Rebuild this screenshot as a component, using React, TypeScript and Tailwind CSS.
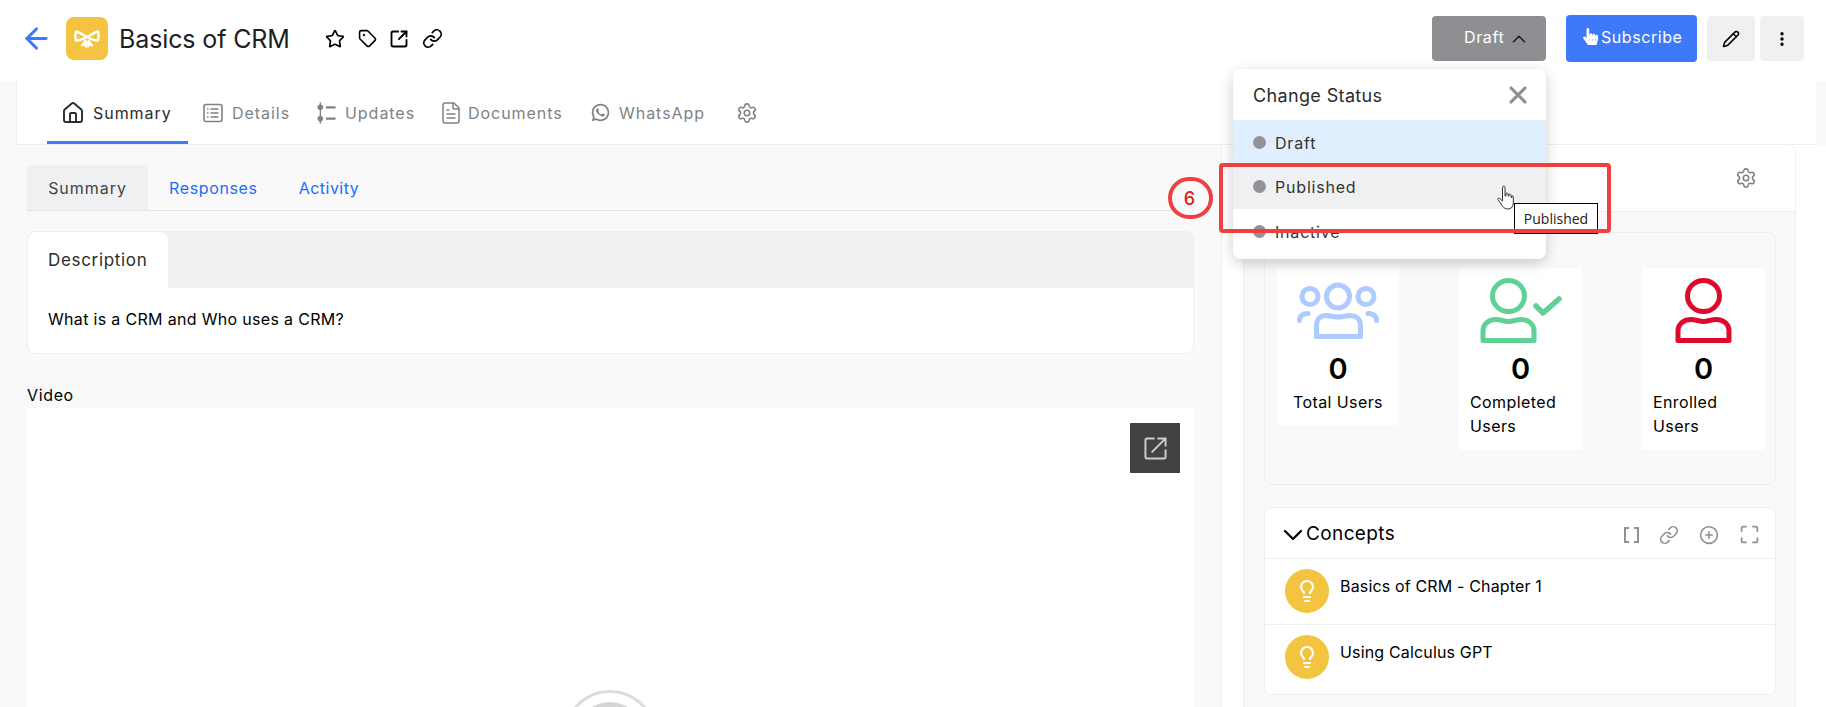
import React from 'react'
import {
  ArrowLeft,
  ChevronDown,
  ChevronUp,
  CirclePlus,
  EllipsisVertical,
  FileText,
  House,
  Lightbulb,
  Link,
  Maximize,
  Pencil,
  Settings,
  SquareArrowOutUpRight,
  Star,
  Tag,
  X,
} from 'lucide-react'
import { RiWhatsappLine } from 'react-icons/ri'
import { FaHandPointer } from 'react-icons/fa'

const Bow = () => (
  <svg viewBox="0 0 26 20" className="w-[26px] h-[20px]" fill="none" stroke="#fff" strokeWidth="2.4" strokeLinejoin="round">
    <path d="M12 7.500C8 5 4.500 3 2 2.500c-.8 3-.8 6 0 9 3.500 0 7-1 10-3.500z" />
    <path d="M14 7.500c4-2.500 7.500-4.500 10-5 .8 3 .8 6 0 9-3.500 0-7-1-10-3.500z" />
    <path d="M13 6.500v3" strokeWidth="4" />
    <path d="M11 11l-4 6 3.500-.5 1.500 2 1-6zM15 11l4 6-3.500-.5-1.500 2-1-6z" fill="#fff" strokeWidth="1" />
  </svg>
)

const DetailsIcon = () => (
  <svg viewBox="0 0 20 20" className="w-[20px] h-[20px]" fill="none" stroke="#7e8287" strokeWidth="1.6">
    <rect x="1" y="1.500" width="18" height="17" rx="2" />
    <path d="M7.500 6h8M7.500 10h8M7.500 14h8M4 6h1.500M4 10h1.500M4 14h1.500" />
  </svg>
)

const UpdatesIcon = () => (
  <svg viewBox="0 0 20 22" className="w-[19px] h-[22px]" fill="#7e8287" stroke="#7e8287">
    <circle cx="3.500" cy="5" r="2.600" />
    <circle cx="3.500" cy="17" r="2.600" />
    <path d="M3.500 0v22" strokeWidth="1.400" />
    <path d="M9.500 5h10M9.500 17h10" strokeWidth="2.400" />
  </svg>
)

const Person = ({ color }: { color: string }) => (
  <svg viewBox="0 0 57 65" className="w-[57px] h-[65px] shrink-0" fill="none" stroke={color} strokeWidth="5" strokeLinejoin="round">
    <ellipse cx="28.500" cy="18" rx="16" ry="15.500" />
    <path d="M3 62.500H54V53C54 45 47 41.500 41 41.500C36 41.500 33 43.500 28.500 43.500C24 43.500 21 41.500 16 41.500C10 41.500 3 45 3 53Z" />
  </svg>
)

const TotalIcon = () => (
  <svg viewBox="0 0 82 57" className="w-[82px] h-[57px]" fill="none" stroke="#adcbff" strokeWidth="5" strokeLinecap="round" strokeLinejoin="round">
    <circle cx="41" cy="14.500" r="11.500" />
    <circle cx="13" cy="14.500" r="8" />
    <circle cx="69" cy="14.500" r="8" />
    <path d="M19.500 54.500H63.500V44C63.500 36 58 33.500 53 33.500C49 33.500 46 35 41 35C36 35 33 33.500 29 33.500C24 33.500 19.500 36 19.500 44Z" />
    <path d="M2.500 38.500C2.500 34 6 31.500 11 31.500" />
    <path d="M79.500 38.500C79.500 34 76 31.500 71 31.500" />
  </svg>
)

const CheckIcon = () => (
  <svg viewBox="0 0 29 21" className="w-[29px] h-[21px] absolute left-[53px] top-[18px]" fill="none" stroke="#61d095" strokeWidth="5.500" strokeLinecap="round" strokeLinejoin="round">
    <path d="M3 10l7 7L26 3" />
  </svg>
)

const navItems = [
  { label: 'Details', icon: <DetailsIcon />, cls: 'w-[54px]', tab: 'gap-[9px] pl-[15px] pr-[16px]' },
  { label: 'Updates', icon: <UpdatesIcon />, cls: 'w-[68px]', tab: 'gap-[9px] pl-[15px] pr-[26px]' },
  { label: 'Documents', icon: <FileText size={24} strokeWidth={1.500} className="text-[#7e8287]" />, cls: 'w-[94px]', tab: 'gap-[5px] pr-[28px]' },
  { label: 'WhatsApp', icon: <RiWhatsappLine size={21} className="text-[#7e8287]" />, cls: 'w-[84px]', tab: 'gap-[8px] pr-[33px]' },
]

const concepts = ['Basics of CRM - Chapter 1', 'Using Calculus GPT']

const statuses = [
  { label: 'Draft', cls: 'bg-[#e0effd]' },
  { label: 'Published', cls: 'bg-[#eff0f2]' },
  { label: 'Inactive', cls: 'bg-white' },
]

const App = () => {
  return (
    <div className="relative w-[1826px] h-[707px] overflow-hidden bg-white font-[Inter,sans-serif] text-black">
      {/* top header */}
      <header className="h-[81px] flex items-center pl-[20px] pr-[22px] pb-[4px]">
        <ArrowLeft size={33} strokeWidth={2.100} className="text-[#3d79f9]" />
        <div className="ml-[13px] w-[42px] h-[43px] rounded-lg bg-[#f4c342] flex items-center justify-center">
          <Bow />
        </div>
        <h1 className="ml-[11px] mt-[2px] w-[170px] whitespace-nowrap text-[25px] text-[#1c2126] tracking-[-0.005em]">Basics of CRM</h1>
        <div className="ml-[36px] flex items-center">
          <Star size={20} strokeWidth={2} />
          <Tag size={19} strokeWidth={2} className="ml-[13px]" />
          <SquareArrowOutUpRight size={20} strokeWidth={2.200} className="ml-[12px]" />
          <Link size={21} strokeWidth={2} className="ml-[13px]" />
        </div>
        <div className="ml-auto flex items-center">
          <button className="w-[114px] h-[45px] rounded bg-[#8e8f92] flex items-center pl-[32px] text-white text-[16px]">
            <span className="w-[40px] -mt-[3px] tracking-[0.04em]">Draft</span>
            <ChevronUp size={22} strokeWidth={1.900} className="ml-[4px] text-[#222]" />
          </button>
          <button className="ml-[20px] w-[131px] h-[47px] rounded bg-[#3d79f9] flex items-center pl-[16px] gap-[2px] text-white text-[16px]">
            <FaHandPointer size={17} className="-mt-[4px]" />
            <span className="-mt-[3px] tracking-[0.035em]">Subscribe</span>
          </button>
          <button className="ml-[10px] w-[48px] h-[45px] rounded bg-[#eff0f2] flex items-center justify-center">
            <Pencil size={18} strokeWidth={2} />
          </button>
          <button className="ml-[5px] w-[44px] h-[45px] rounded bg-[#eff0f2] flex items-center justify-center">
            <EllipsisVertical size={18} strokeWidth={2.500} />
          </button>
        </div>
      </header>

      {/* module tabs */}
      <div className="h-[64px] bg-[#f9f9fa] pl-[16px] pr-[10px]">
        <nav className="h-full bg-white border-l border-b border-[#eeeeee] pl-[30px] flex items-stretch text-[16px]">
          <div className="w-[141px] border-b-[3px] border-[#3d79f9] flex items-center gap-[8px] pl-[14px] pt-[3px] text-[#2b2b2b]">
            <House size={24} strokeWidth={1.900} />
            <span className="whitespace-nowrap tracking-[0.06em]">Summary</span>
          </div>
          {navItems.map((item) => (
            <div key={item.label} className={`flex items-center text-[#7e8287] ${item.tab}`}>
              {item.icon}
              <span className={`whitespace-nowrap tracking-[0.06em] ${item.cls}`}>{item.label}</span>
            </div>
          ))}
          <div className="flex items-center">
            <Settings size={22} strokeWidth={1.700} className="text-[#7e8287]" />
          </div>
        </nav>
      </div>

      <div className="flex h-[562px]">
        {/* left column */}
        <main className="w-[1222px] border-r border-[#eeeeee] bg-[#f9f9fa] pl-[27px] pr-[27px] pt-[20px] flex flex-col">
          <div className="h-[46px] flex items-stretch border-b border-[#e0e3eb] text-[16px]">
            <div className="w-[121px] bg-[#eff0f2] rounded-t flex items-center justify-center text-[#444]">
              <span className="tracking-[0.06em]">Summary</span>
            </div>
            <div className="ml-[21px] flex items-center text-[#1a6dff] tracking-[0.04em]">Responses</div>
            <div className="ml-[41px] flex items-center text-[#1a6dff] tracking-[0.03em]">Activity</div>
          </div>

          <section className="mt-[20px] h-[123px] bg-white rounded-lg border border-[#eeeeee] overflow-hidden">
            <div className="h-[56px] bg-[#eff0f2]">
              <div className="w-[140px] h-full bg-white rounded-t-lg flex items-center pl-[20px] pt-[2px] text-[17px] text-[#2b2b2b] tracking-[0.04em]">Description</div>
            </div>
            <p className="pl-[20px] pt-[19px] text-[16px] tracking-[0.02em]">What is a CRM and Who uses a CRM?</p>
          </section>

          <div className="mt-[32px] h-[22px] text-[16px] leading-[18px] tracking-[0.04em]">Video</div>
          <div className="relative flex-1 bg-white overflow-hidden">
            <div className="absolute top-[15px] right-[14px] w-[50px] h-[50px] bg-[#424242] flex items-center justify-center">
              <svg viewBox="0 0 24 24" className="w-[23px] h-[23px]" fill="none" stroke="#cfcfcf" strokeWidth="2">
                <path d="M11 1.500H3a1.500 1.500 0 0 0-1.500 1.500v18A1.500 1.500 0 0 0 3 22.500h18a1.500 1.500 0 0 0 1.500-1.500v-8" />
                <path d="M8 16L22 2M14 1.500h8.500V10" />
              </svg>
            </div>
            <div className="absolute left-[536px] top-[282px] w-[94px] h-[94px] rounded-full border-[3px] border-[#dddddd] flex items-center justify-center">
              <div className="w-[70px] h-[70px] rounded-full bg-[#d6d6d6]" />
            </div>
          </div>
        </main>

        {/* right column */}
        <aside className="flex-1 pl-[21px] pr-[30px]">
          <div className="h-full border-l border-r border-[#eeeeee] bg-[#f9f9f9] rounded-tr-lg">
            <div className="h-[67px] bg-white rounded-tr-lg border-b border-[#eeeeee] flex items-center justify-end pr-[38px]">
              <Settings size={22} strokeWidth={1.700} className="text-[#7e8287]" />
            </div>

            <div className="px-[20px] pr-[19px]">
              <section className="mt-[20px] h-[253px] rounded-lg border border-[#eeeeee] pl-[12px] pr-[10px] pt-[35px] flex justify-between items-start">
                <div className="w-[122px] h-[157px] bg-white flex flex-col items-center">
                  <div className="mt-[14px] h-[70px]"><TotalIcon /></div>
                  <div className="h-[32px] leading-[32px] mt-[1px] text-[29px] font-semibold">0</div>
                  <div className="mt-[5px] text-[16px] leading-[24px] tracking-[0.025em] whitespace-nowrap">Total Users</div>
                </div>
                <div className="w-[123px] h-[182px] bg-white flex flex-col items-center">
                  <div className="relative mt-[10px] h-[74px] w-[82px]">
                    <Person color="#61d095" />
                    <CheckIcon />
                  </div>
                  <div className="h-[32px] leading-[32px] mt-[1px] text-[29px] font-semibold">0</div>
                  <div className="mt-[5px] self-start pl-[11px] text-[16px] leading-[24px] tracking-[0.025em] w-[115px]">Completed Users</div>
                </div>
                <div className="w-[123px] h-[182px] bg-white flex flex-col items-center">
                  <div className="mt-[10px] h-[74px]"><Person color="#dc0a2d" /></div>
                  <div className="h-[32px] leading-[32px] mt-[1px] text-[29px] font-semibold">0</div>
                  <div className="mt-[5px] self-start pl-[11px] text-[16px] leading-[24px] tracking-[0.025em] w-[90px]">Enrolled Users</div>
                </div>
              </section>

              <section className="mt-[22px] h-[188px] bg-white rounded-lg border border-[#eeeeee]">
                <div className="h-[51px] border-b border-[#eeeeee] flex items-center pl-[12px] pr-[15px] pt-[3px]">
                  <ChevronDown size={32} strokeWidth={1.700} className="-mr-[3px]" />
                  <span className="text-[19px] tracking-[0.02em]">Concepts</span>
                  <div className="ml-auto flex items-center gap-[20px] text-[#8e9196]">
                    <svg viewBox="0 0 15 16" className="w-[15px] h-[16px]" fill="none" stroke="currentColor" strokeWidth="2">
                      <path d="M5 1H1v14h4M10 1h4v14h-4" />
                    </svg>
                    <Link size={20} strokeWidth={2} />
                    <CirclePlus size={20} strokeWidth={1.900} />
                    <Maximize size={21} strokeWidth={2} />
                  </div>
                </div>
                {concepts.map((c, i) => (
                  <div key={c} className={`h-[66px] flex items-start pl-[20px] pt-[10px] ${i === 0 ? 'border-b border-[#eeeeee]' : ''}`}>
                    <div className="w-[44px] h-[44px] rounded-full bg-[#f2c440] flex items-center justify-center">
                      <Lightbulb size={24} strokeWidth={2.200} className="text-white" />
                    </div>
                    <span className="ml-[11px] mt-[5px] text-[16px] tracking-[0.01em]">{c}</span>
                  </div>
                ))}
              </section>
            </div>
          </div>
        </aside>
      </div>

      {/* status dropdown */}
      <div className="absolute left-[1233px] top-[69px] w-[313px] h-[190px] bg-white rounded-lg shadow-[0_4px_14px_rgba(0,0,0,0.2)] overflow-hidden">
        <div className="h-[51px] flex items-center justify-between pl-[20px] pr-[14px]">
          <span className="mt-[1px] text-[18px] text-[#2b2b2b] tracking-[0.02em]">Change Status</span>
          <X size={28} strokeWidth={2.700} className="text-[#8e8f92]" />
        </div>
        {statuses.map((s) => (
          <div key={s.label} className={`h-[44.500px] flex items-center pl-[20px] gap-[9px] text-[16px] text-[#333] ${s.cls}`}>
            <span className="w-[13px] h-[13px] rounded-full bg-[#929396]" />
            <span className="mt-[1px] tracking-[0.05em]">{s.label}</span>
          </div>
        ))}
      </div>

      {/* native tooltip + cursor */}
      <div className="absolute left-[1514px] top-[203px] w-[84px] h-[31px] bg-white border border-black flex items-center justify-center text-[14px] font-['Open_Sans',sans-serif] text-[#222]">
        Published
      </div>
      <svg viewBox="0 0 18 25" className="absolute left-[1497px] top-[185px] w-[18px] h-[25px]" fill="#fff" stroke="#333" strokeWidth="1" strokeLinejoin="round">
        <path d="M6 1.500c1-.8 2-.2 2 1V11l1-.2V8.500c.8-.8 2-.5 2 .5v2l1 .2V9.500c.8-.6 2-.3 2 .8v2l.8.2v-1.500c.8-.5 1.500 0 1.500 1v6c0 3.500-2 6-5.500 6S6 22 4 19l-3-4.500c-.5-1 .8-2 1.800-1L5.500 16V3z" />
      </svg>

      {/* annotation */}
      <div className="absolute left-[1219px] top-[163px] w-[392px] h-[70px] rounded border-[4px] border-[#ef4040]" />
      <div className="absolute left-[1168px] top-[177px] w-[45px] h-[42px] rounded-full border-[4px] border-[#ef4040] bg-[#fafafa] flex items-center justify-center pr-[2px] text-[#e02020] text-[18px] font-medium">
        6
      </div>
    </div>
  )
}

export default App
